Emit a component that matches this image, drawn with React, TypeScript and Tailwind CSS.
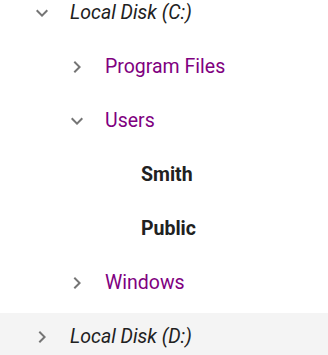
import React from 'react';

type Node = {
  label: string;
  level: number;
  state: 'open' | 'closed' | 'leaf';
  kind: 'disk' | 'folder' | 'user';
  hover?: boolean;
};

const rows: Node[] = [
  { label: 'Local Disk (C:)', level: 0, state: 'open', kind: 'disk' },
  { label: 'Program Files', level: 1, state: 'closed', kind: 'folder' },
  { label: 'Users', level: 1, state: 'open', kind: 'folder' },
  { label: 'Smith', level: 2, state: 'leaf', kind: 'user' },
  { label: 'Public', level: 2, state: 'leaf', kind: 'user' },
  { label: 'Windows', level: 1, state: 'closed', kind: 'folder' },
  { label: 'Local Disk (D:)', level: 0, state: 'closed', kind: 'disk', hover: true },
];

const Chevron = ({ open }: { open: boolean }) => (
  <svg viewBox="0 0 24 24" className="w-6 h-6 shrink-0 fill-[#757575]">
    {open ? (
      <path d="M16.59 8.59L12 13.17 7.41 8.59 6 10l6 6 6-6z" />
    ) : (
      <path d="M10 6L8.59 7.41 13.17 12l-4.58 4.59L10 18l6-6z" />
    )}
  </svg>
);

const indent = ['pl-[30px]', 'pl-[65px]', 'pl-[101px]'];

const textStyle = {
  disk: 'italic text-[#212121]',
  folder: 'text-[#800080]',
  user: 'font-bold text-[#212121]',
};

export default function App() {
  return (
    <div className="w-[328px] h-[355px] overflow-hidden bg-white font-['Roboto',sans-serif]">
      <ul className="-mt-[14px]">
        {rows.map((r) => (
          <li key={r.label} className="py-[3px]">
            <div
              className={`flex items-center h-12 gap-4 ${indent[r.level]} ${r.hover ? 'bg-[#f4f4f4]' : ''}`}
            >
              {r.state === 'leaf' ? (
                <span className="w-6 h-6 shrink-0" />
              ) : (
                <Chevron open={r.state === 'open'} />
              )}
              <span className={`text-[19.5px] leading-6 ${textStyle[r.kind]}`}>{r.label}</span>
            </div>
          </li>
        ))}
      </ul>
    </div>
  );
}
